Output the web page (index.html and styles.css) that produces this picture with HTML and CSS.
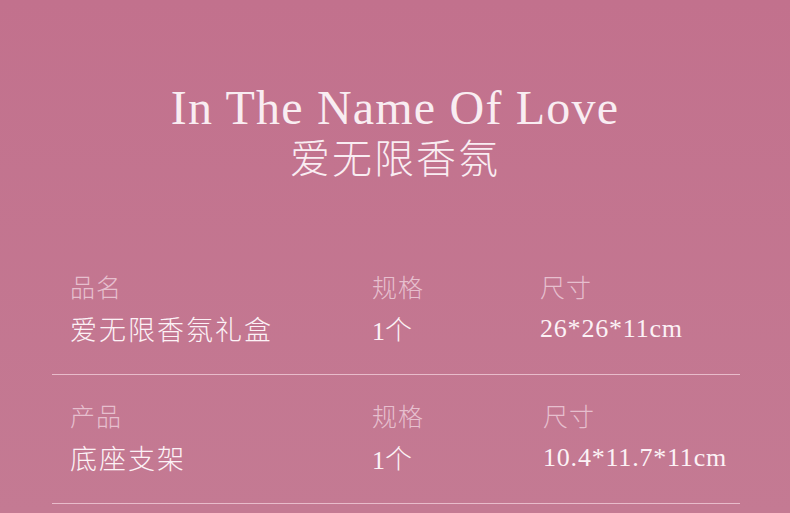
FILE: index.html
```html
<!DOCTYPE html>
<html lang="zh">
<head>
<meta charset="utf-8">
<title>In The Name Of Love</title>
<link rel="stylesheet" href="styles.css">
</head>
<body>
<main class="page">
  <header class="heading">
    <h1 class="title-en">In The Name Of Love</h1>
    <h2 class="title-cn">爱无限香氛</h2>
  </header>
  <section class="specs">
    <div class="row">
      <div class="cell">
        <div class="label">品名</div>
        <div class="value">爱无限香氛礼盒</div>
      </div>
      <div class="cell">
        <div class="label">规格</div>
        <div class="value"><span class="num">1</span>个</div>
      </div>
      <div class="cell">
        <div class="label">尺寸</div>
        <div class="value num">26*26*11cm</div>
      </div>
    </div>
    <div class="row row-alt">
      <div class="cell">
        <div class="label">产品</div>
        <div class="value">底座支架</div>
      </div>
      <div class="cell">
        <div class="label">规格</div>
        <div class="value"><span class="num">1</span>个</div>
      </div>
      <div class="cell">
        <div class="label">尺寸</div>
        <div class="value num">10.4*11.7*11cm</div>
      </div>
    </div>
  </section>
</main>
</body>
</html>
```

FILE: styles.css
```css
html, body {
  margin: 0;
  padding: 0;
}
body {
  width: 790px;
  height: 513px;
  overflow: hidden;
  background: linear-gradient(180deg, #c2718d 0%, #c47a93 100%);
  font-family: "Noto Sans CJK SC", "Liberation Serif", serif;
  font-weight: 300;
}
.page {
  display: flex;
  flex-direction: column;
  padding-top: 84px;
}
.heading {
  display: flex;
  flex-direction: column;
  align-items: center;
  text-align: center;
  gap: 2px;
}
.title-en {
  margin: 0;
  font-family: "Liberation Serif", serif;
  font-weight: 400;
  font-size: 48px;
  line-height: 48px;
  letter-spacing: 1.2px;
  color: #f9edf2;
}
.title-cn {
  margin: 0;
  font-family: "Noto Sans CJK SC", sans-serif;
  font-weight: 300;
  font-size: 40px;
  line-height: 44px;
  letter-spacing: 2px;
  color: #f9edf2;
}
.specs {
  margin: 93px 50px 0 52px;
  display: flex;
  flex-direction: column;
}
.row {
  display: grid;
  grid-template-columns: 302px 168px 1fr;
  padding: 0 0 26px 18px;
  border-bottom: 1px solid #e8bccb;
}
.row-alt {
  padding-top: 25px;
  grid-template-columns: 302px 171px 1fr;
}
.cell {
  display: flex;
  flex-direction: column;
  gap: 12px;
}
.label {
  font-size: 25px;
  line-height: 30px;
  letter-spacing: 1px;
  color: #e6bfce;
}
.value {
  font-size: 27px;
  line-height: 32px;
  letter-spacing: 2px;
  color: #fcf2f6;
}
.num {
  font-family: "Liberation Serif", serif;
  font-weight: 400;
  font-size: 26px;
  letter-spacing: 0.8px;
}
.value .num {
  letter-spacing: 0;
}
```
